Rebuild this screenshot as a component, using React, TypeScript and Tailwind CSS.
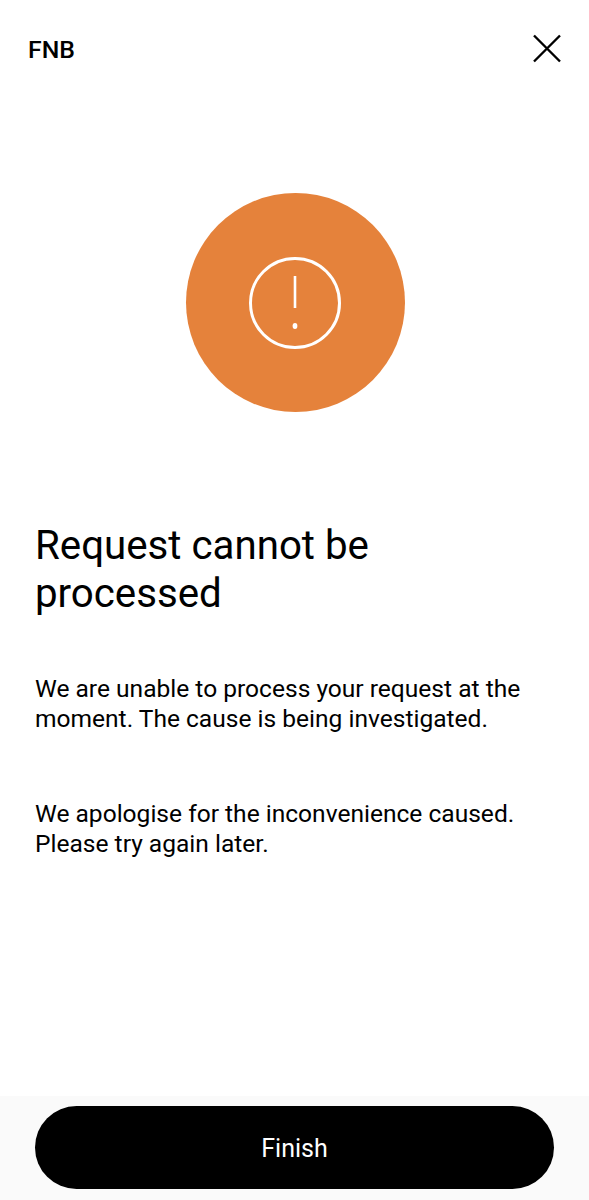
const App = () => {
  return (
    <div className="flex h-[1200px] w-[589px] flex-col bg-white font-['Roboto',sans-serif] text-black">
      <header className="flex h-[96px] items-start justify-between pl-[28px] pr-[27px] pt-[34px]">
        <span className="text-[24.8px] font-medium leading-[32px]">FNB</span>
        <svg width="30" height="30" viewBox="0 0 30 30" fill="none" stroke="#000" strokeWidth="2.4">
          <path d="M2 1.5 L28 27.5 M28 1.5 L2 27.5" />
        </svg>
      </header>

      <div className="mt-[97px] flex justify-center pl-px">
        <div className="flex h-[219px] w-[219px] items-center justify-center rounded-full bg-[#e5823b]">
          <svg width="94" height="94" viewBox="0 0 94 94" fill="none" stroke="#fff">
            <circle cx="47" cy="47" r="44.5" strokeWidth="3" />
            <path d="M47 20 V52" strokeWidth="2.6" />
            <ellipse cx="47" cy="70" rx="2.4" ry="3" fill="#fff" stroke="none" />
          </svg>
        </div>
      </div>

      <div className="flex-1 px-[35px] pt-[110px]">
        <h1 className="text-[40.25px] font-normal leading-[48px]">Request cannot be processed</h1>
        <p className="mt-[56px] text-[24.55px] leading-[30px]">
          We are unable to process your request at the moment. The cause is being investigated.
        </p>
        <p className="mt-[65px] text-[24.55px] leading-[30px]">
          We apologise for the inconvenience caused. Please try again later.
        </p>
      </div>

      <footer className="h-[104px] bg-[#fafafa] px-[35px] pt-[10px]">
        <button className="h-[83px] w-full rounded-full bg-black pt-[3px] text-[25px] text-white">Finish</button>
      </footer>
    </div>
  );
};

export default App;
